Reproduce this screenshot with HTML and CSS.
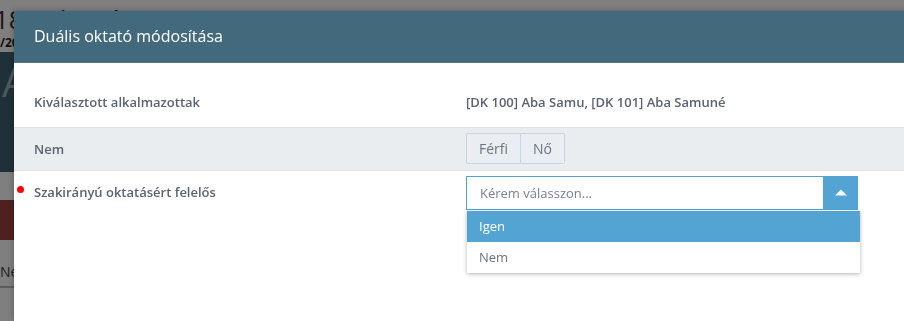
FILE: index.html
```html
<!DOCTYPE html>
<html lang="hu">
<head>
    <meta charset="UTF-8">
    <title>Duális oktató módosítása</title>
    <link rel="stylesheet" href="styles.css">
</head>
<body>
    <div class="page">
        <div class="page-title">18 · oktatói NSZTFV</div>
        <div class="page-sub">/2024</div>
        <div class="page-banner">A</div>
        <div class="page-gap"></div>
        <div class="page-alert"></div>
        <div class="page-tabs">Név</div>
    </div>

    <div class="overlay"></div>

    <div class="modal">
        <div class="modal-header">Duális oktató módosítása</div>
        <div class="modal-body">
            <div class="row">
                <div class="label">Kiválasztott alkalmazottak</div>
                <div class="value">[DK 100] Aba Samu, [DK 101] Aba Samuné</div>
            </div>
            <div class="row row-alt row-tight">
                <div class="label">Nem</div>
                <div class="btn-group">
                    <span class="btn">Férfi</span>
                    <span class="btn">Nő</span>
                </div>
            </div>
            <div class="row row-select">
                <div class="label required">Szakirányú oktatásért felelős</div>
                <div class="select-wrap">
                    <div class="select">
                        <span class="placeholder">Kérem válasszon...</span>
                        <span class="select-arrow">
                            <svg width="12" height="7" viewBox="0 0 12 7"><path d="M0 6.5 L6 0.5 L12 6.5 Z" fill="#fff"/></svg>
                        </span>
                    </div>
                    <ul class="dropdown">
                        <li class="active">Igen</li>
                        <li>Nem</li>
                    </ul>
                </div>
            </div>
        </div>
    </div>
</body>
</html>
```

FILE: styles.css
```css
body {
    margin: 0;
    font-family: "Open Sans", "Noto Sans", sans-serif;
    font-size: 13px;
    background-color: #fff;
    overflow: hidden;
    height: 321px;
}
.page {
    width: 904px;
}
.page-title {
    font-size: 26px;
    color: #333;
    padding: 4px 0 0 0;
    height: 30px;
    margin-left: -6px;
    line-height: 30px;
    white-space: nowrap;
}
.page-sub {
    font-weight: bold;
    font-size: 12px;
    color: #222;
    height: 18px;
    line-height: 18px;
}
.page-banner {
    background-color: #3e6070;
    height: 120px;
    color: #9bb0ba;
    font-size: 40px;
    line-height: 60px;
    padding-left: 2px;
}
.page-gap {
    height: 28px;
}
.page-alert {
    background-color: #9e4040;
    height: 40px;
}
.page-tabs {
    margin-top: 18px;
    height: 28px;
    line-height: 28px;
    border-bottom: 2px solid #bbb;
    color: #345;
    font-size: 14px;
}
.overlay {
    position: fixed;
    inset: 0;
    background-color: rgba(0, 0, 0, 0.5);
}
.modal {
    position: absolute;
    left: 14px;
    top: 11px;
    width: 900px;
    height: 310px;
    background-color: #fff;
    box-shadow: 0 0 6px rgba(0, 0, 0, 0.3);
}
.modal-header {
    background-color: #426a7c;
    color: #fff;
    font-size: 16px;
    height: 51px;
    line-height: 51px;
    padding-left: 20px;
    border-bottom: 1px solid #56798a;
}
.modal-body {
    padding-top: 14px;
}
.row {
    display: grid;
    grid-template-columns: 432px 1fr;
    padding: 15px 20px;
    align-items: start;
    line-height: 20px;
    color: #5b6472;
    font-weight: 600;
}
.row-alt {
    background-color: #e9edf0;
    border-top: 1px solid #dfe3e7;
    border-bottom: 1px solid #dfe3e7;
}
.row-tight {
    padding: 5px 20px 6px;
    align-items: center;
}
.row-select {
    padding: 5px 20px 0;
}
.row-select .label {
    padding-top: 6px;
}
.label {
    position: relative;
}
.required::before {
    content: "";
    position: absolute;
    left: -17px;
    top: 10px;
    width: 7px;
    height: 7px;
    border-radius: 50%;
    background-color: #f00;
}
.btn-group {
    display: flex;
}
.btn {
    display: inline-block;
    font-weight: normal;
    font-size: 14px;
    color: #6b7480;
    border: 1px solid #cad5e0;
    background-color: #eaeef2;
    padding: 5px 12px 4px;
    line-height: 20px;
}
.btn + .btn {
    border-left: none;
}
.btn:first-child {
    border-radius: 2px 0 0 2px;
}
.btn:last-child {
    border-radius: 0 2px 2px 0;
}
.select-wrap {
    width: 392px;
}
.select {
    display: flex;
    height: 32px;
    border: 1px solid #52a3d1;
    border-right: none;
}
.placeholder {
    flex: 1;
    font-weight: normal;
    color: #7a8290;
    padding-left: 13px;
    line-height: 32px;
}
.select-arrow {
    width: 35px;
    margin: -1px 0;
    background-color: #54a4d3;
    display: flex;
    align-items: center;
    justify-content: center;
    padding-bottom: 2px;
}
.dropdown {
    list-style: none;
    margin: 1px 0 0 1px;
    padding: 0;
    width: 393px;
    background-color: #fff;
    box-shadow: 0 1px 4px rgba(0, 0, 0, 0.3);
}
.dropdown li {
    height: 31px;
    line-height: 31px;
    padding-left: 12px;
    font-weight: normal;
    color: #6b7480;
}
.dropdown li.active {
    background-color: #54a4d3;
    color: #fff;
}
```
